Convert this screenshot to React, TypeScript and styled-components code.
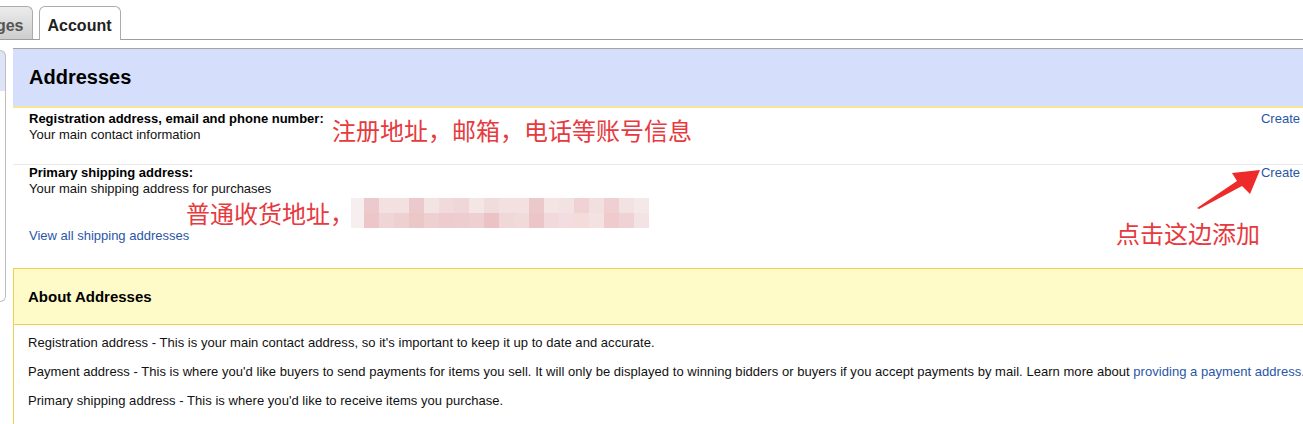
import React from "react";
import styled, { createGlobalStyle } from "styled-components";

const GlobalStyle = createGlobalStyle`
  html, body {
    margin: 0;
    padding: 0;
    overflow: hidden;
    background: #ffffff;
  }
  body {
    font-family: "Liberation Sans", Arial, sans-serif;
    font-size: 13px;
    color: #111;
  }
`

const Page = styled.div`
  width: 1303px;
  height: 424px;
  overflow: hidden;
`

const TabBar = styled.div`
  display: flex;
  align-items: flex-end;
  gap: 6px;
  height: 40px;
  box-sizing: border-box;
  border-bottom: 1px solid #9d9d9d;
`

const Tab = styled.div<{ $active?: boolean }>`
  height: ${p => (p.$active ? "34px" : "33px")};
  margin-bottom: ${p => (p.$active ? "-1px" : "0")};
  padding: 5px 8px 0;
  box-sizing: border-box;
  border: 1px solid #ababab;
  border-bottom: none;
  border-radius: 6px 6px 0 0;
  font-size: 16px;
  font-weight: bold;
  line-height: 28px;
  white-space: nowrap;
  color: ${p => (p.$active ? "#222" : "#555")};
  background: ${p => (p.$active ? "#fff" : "linear-gradient(#ececec, #cdcdcd)")};
  &:first-child {
    margin-left: -62px;
  }
`

const Content = styled.div`
  display: flex;
  align-items: flex-start;
  gap: 7px;
`

const Sidebar = styled.div`
  flex-shrink: 0;
  width: 5px;
  height: 250px;
  margin-top: 10px;
  border: 1px solid #bdbdbd;
  border-left: none;
  border-radius: 0 7px 7px 0;
  background: linear-gradient(#dde4f7 0, #dde4f7 40px, #ffffff 40px);
`

const Main = styled.div`
  flex-shrink: 0;
  width: 1300px;
  margin-top: 8px;
`

const SectionHeader = styled.div`
  display: flex;
  align-items: center;
  height: 57px;
  padding-left: 16px;
  border-top: 1px solid #a3a3a3;
  border-bottom: 2px solid #f4e79c;
  background: #d5defa;
`

const Title = styled.h1`
  margin: 0;
  font-size: 20px;
  font-weight: bold;
  color: #000;
`

const Row = styled.div<{ $first?: boolean }>`
  position: relative;
  display: flex;
  justify-content: space-between;
  padding: ${p => (p.$first ? "3px 13px 0 16px" : "0 13px 0 16px")};
  height: ${p => (p.$first ? "53px" : "auto")};
  border-bottom: ${p => (p.$first ? "1px solid #e8e8e8" : "none")};
  line-height: 16px;
`

const RowText = styled.div`
  display: flex;
  flex-direction: column;
`

const RowTitle = styled.div`
  font-weight: bold;
  color: #000;
`

const Link = styled.a`
  color: #2a56a8;
  text-decoration: none;
  cursor: pointer;
`

const Note = styled.div`
  font-family: "Noto Sans CJK SC", "Noto Sans", sans-serif;
  font-size: 24px;
  line-height: 28px;
  color: #e63a3e;
  white-space: nowrap;
`

const FloatNote = styled(Note)<{ $left: number; $top: number }>`
  position: absolute;
  left: ${p => p.$left}px;
  top: ${p => p.$top}px;
`

const NoteLine = styled.div`
  display: flex;
  align-items: center;
  height: 31px;
  margin-left: 157px;
`

const Blur = styled.div`
  display: grid;
  grid-template-columns: 13px repeat(19, 15px);
  grid-auto-rows: 15px;
  margin-left: -3px;
`

const Cell = styled.div<{ $c: string }>`
  background: ${p => p.$c};
`

const Arrow = styled.svg`
  position: absolute;
  left: 1176px;
  top: 0;
`

const About = styled.div`
  margin-top: 24px;
  border-left: 1px solid #efd055;
`

const AboutHeader = styled.div`
  display: flex;
  align-items: center;
  height: 55px;
  padding-left: 14px;
  border-top: 1px solid #efd055;
  border-bottom: 1px solid #efd055;
  background: #fffbc8;
  font-size: 15px;
  font-weight: bold;
  color: #000;
`

const AboutBody = styled.div`
  padding: 10px 0 40px 14px;
  line-height: 16px;
  letter-spacing: 0.04px;
  white-space: nowrap;
`

const Para = styled.p`
  margin: 0 0 13px;
`

const blurTop = [
  "#f7efef", "#ecc9cc", "#f3e1e1", "#f3e1e1", "#ecc9cc", "#f3e4e4", "#f0dadb", "#efd6d8", "#f5e6e6", "#f1dcdd",
  "#f3e1e1", "#f3e1e1", "#ebc8ca", "#f4e4e4", "#f3e2e2", "#f0d2d4", "#f2dfe0", "#efcfd2", "#f3e2e2", "#f5e8e8",
]
const blurBottom = [
  "#f7efef", "#ecc6c9", "#efd5d6", "#eed0d1", "#ecc7c8", "#eed0d1", "#edcbce", "#eecdd0", "#efd0d2", "#ecc3c5",
  "#f0d8d8", "#f1dada", "#ebc5c7", "#f2d9db", "#f3dde0", "#f3dcd9", "#f4e2e2", "#efcbcd", "#efd2d3", "#f4e3e4",
]

export default function App() {
  return (
    <Page>
      <GlobalStyle />
      <TabBar>
        <Tab>Messages</Tab>
        <Tab $active>Account</Tab>
      </TabBar>
      <Content>
        <Sidebar />
        <Main>
          <SectionHeader>
            <Title>Addresses</Title>
          </SectionHeader>

          <Row $first>
            <RowText>
              <RowTitle>Registration address, email and phone number:</RowTitle>
              <span>Your main contact information</span>
            </RowText>
            <Link>Create</Link>
            <FloatNote $left={319} $top={8}>注册地址，邮箱，电话等账号信息</FloatNote>
          </Row>

          <Row>
            <RowText>
              <RowTitle>Primary shipping address:</RowTitle>
              <span>Your main shipping address for purchases</span>
              <NoteLine>
                <Note>普通收货地址，</Note>
                <Blur>
                  {blurTop.concat(blurBottom).map((c, i) => (
                    <Cell key={i} $c={c} />
                  ))}
                </Blur>
              </NoteLine>
              <Link>View all shipping addresses</Link>
            </RowText>
            <Link>Create</Link>
            {/* annotation arrow pointing at the second Create link */}
            <Arrow width="80" height="50" viewBox="0 0 80 50">
              <polygon
                points="8,43 48,16 43,8 71,5 61,29 53,21 10,44"
                fill="#ee2a2a"
              />
            </Arrow>
            <FloatNote $left={1103} $top={54}>点击这边添加</FloatNote>
          </Row>

          <About>
            <AboutHeader>About Addresses</AboutHeader>
            <AboutBody>
              <Para>
                Registration address - This is your main contact address, so it's important to keep it up to date and accurate.
              </Para>
              <Para>
                Payment address - This is where you'd like buyers to send payments for items you sell. It will only be
                displayed to winning bidders or buyers if you accept payments by mail. Learn more about{" "}
                <Link>providing a payment address.</Link>
              </Para>
              <Para>Primary shipping address - This is where you'd like to receive items you purchase.</Para>
            </AboutBody>
          </About>
        </Main>
      </Content>
    </Page>
  )
}
